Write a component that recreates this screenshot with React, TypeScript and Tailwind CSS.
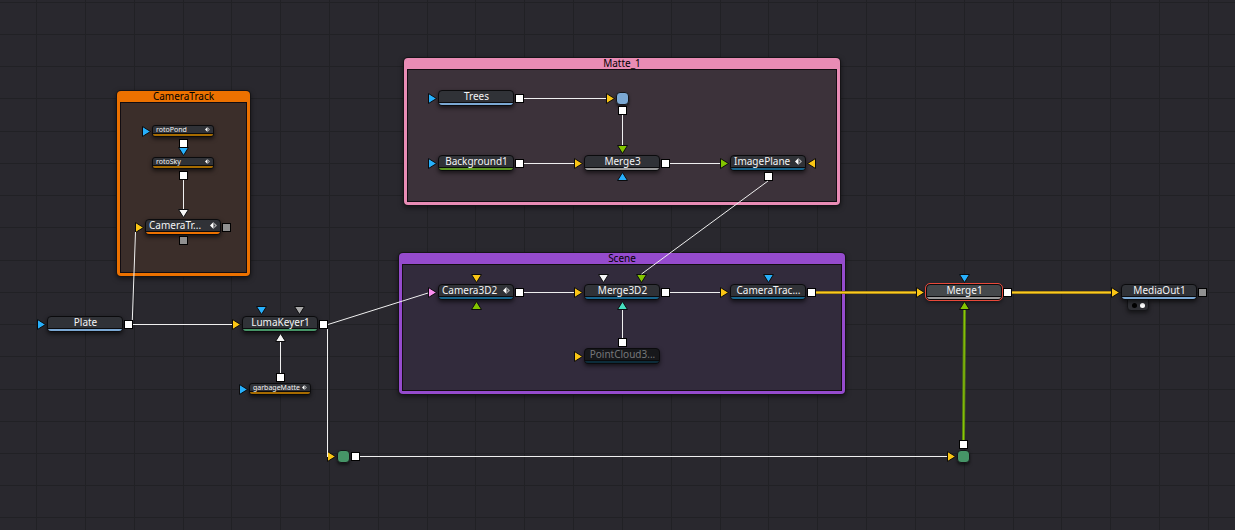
import { clsx } from "clsx";

type Direction = "right" | "left" | "up" | "down";

interface GroupItem {
  title: string;
  x: number;
  y: number;
  width: number;
  height: number;
  frame: string;
  body: string;
}

interface NodeItem {
  name: string;
  x: number;
  y: number;
  stripe: string;
  keyed?: boolean;
  small?: boolean;
  selected?: boolean;
  disabled?: boolean;
}

const groups: GroupItem[] = [
  { title: "CameraTrack", x: 117, y: 91, width: 133, height: 185, frame: "bg-[#ec7100]", body: "bg-[#3b2e2a]" },
  { title: "Matte_1", x: 404, y: 58, width: 436, height: 147, frame: "bg-[#e98cb5]", body: "bg-[#3c323a]" },
  { title: "Scene", x: 399, y: 253, width: 446, height: 141, frame: "bg-[#954bcd]", body: "bg-[#322b3c]" },
];

const nodes: NodeItem[] = [
  { name: "rotoPond", x: 152, y: 125, stripe: "bg-[#a66b00]", keyed: true, small: true },
  { name: "rotoSky", x: 152, y: 157, stripe: "bg-[#a66b00]", keyed: true, small: true },
  { name: "CameraTr...", x: 145, y: 219, stripe: "bg-[#ec7100]", keyed: true },
  { name: "Plate", x: 47, y: 316, stripe: "bg-[#7ba8d3]" },
  { name: "LumaKeyer1", x: 242, y: 316, stripe: "bg-[#469467]" },
  { name: "garbageMatte", x: 249, y: 383, stripe: "bg-[#a66b00]", keyed: true, small: true },
  { name: "Trees", x: 438, y: 90, stripe: "bg-[#7ba8d3]" },
  { name: "Background1", x: 438, y: 155, stripe: "bg-[#5d9a21]" },
  { name: "Merge3", x: 584, y: 155, stripe: "bg-[#9a9a9a]" },
  { name: "ImagePlane", x: 730, y: 155, stripe: "bg-[#17648c]", keyed: true },
  { name: "Camera3D2", x: 438, y: 284, stripe: "bg-[#17648c]", keyed: true },
  { name: "Merge3D2", x: 584, y: 284, stripe: "bg-[#17648c]" },
  { name: "CameraTrac...", x: 730, y: 284, stripe: "bg-[#17648c]" },
  { name: "PointCloud3...", x: 584, y: 348, stripe: "bg-[#0d2c3a]", disabled: true },
  { name: "Merge1", x: 926, y: 284, stripe: "bg-[#9a9a9a]", selected: true },
  { name: "MediaOut1", x: 1121, y: 284, stripe: "bg-[#7ba8d3]" },
];

const routers = [
  { x: 616, y: 92, color: "bg-[#7ba8d3]" },
  { x: 337, y: 450, color: "bg-[#469467]" },
  { x: 957, y: 450, color: "bg-[#469467]" },
];

const outputs: { x: number; y: number; idle?: boolean }[] = [
  { x: 179, y: 139 },
  { x: 179, y: 171 },
  { x: 222, y: 223, idle: true },
  { x: 179, y: 236, idle: true },
  { x: 124, y: 320 },
  { x: 319, y: 320 },
  { x: 276, y: 373 },
  { x: 351, y: 452 },
  { x: 515, y: 94 },
  { x: 618, y: 106 },
  { x: 515, y: 159 },
  { x: 661, y: 159 },
  { x: 764, y: 172 },
  { x: 515, y: 288 },
  { x: 661, y: 288 },
  { x: 807, y: 288 },
  { x: 618, y: 338 },
  { x: 1003, y: 288 },
  { x: 1198, y: 288, idle: true },
  { x: 959, y: 440 },
];

const BLUE = "fill-[#27b0fc]";
const YELLOW = "fill-[#fac515]";
const GREEN = "fill-[#83c400]";
const WHITE = "fill-[#f5f5f5]";

const inputs: { x: number; y: number; dir: Direction; color: string }[] = [
  { x: 142, y: 126, dir: "right", color: BLUE },
  { x: 178, y: 147, dir: "down", color: BLUE },
  { x: 178, y: 209, dir: "down", color: WHITE },
  { x: 135, y: 222, dir: "right", color: YELLOW },
  { x: 37, y: 319, dir: "right", color: BLUE },
  { x: 232, y: 319, dir: "right", color: YELLOW },
  { x: 256, y: 306, dir: "down", color: BLUE },
  { x: 294, y: 306, dir: "down", color: "fill-[#a8a8a8]" },
  { x: 275, y: 333, dir: "up", color: WHITE },
  { x: 239, y: 384, dir: "right", color: BLUE },
  { x: 327, y: 451, dir: "right", color: YELLOW },
  { x: 428, y: 93, dir: "right", color: BLUE },
  { x: 606, y: 93, dir: "right", color: YELLOW },
  { x: 617, y: 145, dir: "down", color: GREEN },
  { x: 428, y: 158, dir: "right", color: BLUE },
  { x: 574, y: 158, dir: "right", color: YELLOW },
  { x: 617, y: 172, dir: "up", color: BLUE },
  { x: 720, y: 158, dir: "right", color: GREEN },
  { x: 807, y: 158, dir: "left", color: YELLOW },
  { x: 428, y: 287, dir: "right", color: "fill-[#fb8ff0]" },
  { x: 471, y: 274, dir: "down", color: YELLOW },
  { x: 471, y: 301, dir: "up", color: GREEN },
  { x: 574, y: 287, dir: "right", color: YELLOW },
  { x: 598, y: 274, dir: "down", color: WHITE },
  { x: 636, y: 274, dir: "down", color: GREEN },
  { x: 617, y: 301, dir: "up", color: "fill-[#47e0c0]" },
  { x: 720, y: 287, dir: "right", color: YELLOW },
  { x: 763, y: 274, dir: "down", color: BLUE },
  { x: 574, y: 351, dir: "right", color: YELLOW },
  { x: 916, y: 287, dir: "right", color: YELLOW },
  { x: 959, y: 274, dir: "down", color: BLUE },
  { x: 959, y: 301, dir: "up", color: GREEN },
  { x: 1111, y: 287, dir: "right", color: YELLOW },
  { x: 947, y: 451, dir: "right", color: YELLOW },
];

const wires = [
  "M183.5 180V209",
  "M133 324.5H232",
  "M132.3 320L135.5 232",
  "M280.5 373V342",
  "M328 324.5L428 293",
  "M327.5 329V457",
  "M360 456.5H947",
  "M524 98.5H606",
  "M622.5 115V145",
  "M524 163.5H574",
  "M670 163.5H720",
  "M768 181L641.5 274",
  "M524 292.5H574",
  "M670 292.5H720",
  "M622.5 338V310",
];

const arrowPaths: Record<Direction, string> = {
  right: "M0.5 0.5L8.5 5.5L0.5 10.5Z",
  left: "M8.5 0.5L0.5 5.5L8.5 10.5Z",
  down: "M0.5 0.5H10.5L5.5 8.5Z",
  up: "M0.5 8.5H10.5L5.5 0.5Z",
};

function Grid() {
  const columns = Array.from({ length: 80 }, (_, i) => Math.floor(36.6 + i * 48.82));
  const rows = Array.from({ length: 70 }, (_, i) => Math.floor(2.15 + i * 32.24));

  return (
    <svg className="absolute inset-0 h-full w-full" aria-hidden="true">
      <g className="stroke-[#212125]">
        {columns.map((x) => (
          <line key={x} x1={x + 0.5} x2={x + 0.5} y1="0" y2="100%" />
        ))}
        {rows.map((y) => (
          <line key={y} x1="0" x2="100%" y1={y + 0.5} y2={y + 0.5} />
        ))}
      </g>
    </svg>
  );
}

function Group({ group }: { group: GroupItem }) {
  return (
    <section
      className={clsx(
        "absolute flex flex-col rounded-sm px-[3px] pb-[3px] shadow-[0_0_0_1px_#151417,0_2px_5px_1px_rgba(0,0,0,0.5)]",
        group.frame,
      )}
      style={{ left: group.x, top: group.y, width: group.width, height: group.height }}
    >
      <h2 className="h-[11px] text-center text-[10px] leading-[10px] text-black">{group.title}</h2>
      <div className={clsx("flex-1 border border-[#120d12]", group.body)} />
    </section>
  );
}

function KeyframeIcon({ small }: { small?: boolean }) {
  return (
    <svg viewBox="0 0 7 7" className={clsx("shrink-0", small ? "size-[5px]" : "size-[7px]")} aria-hidden="true">
      <path d="M3.5 0V7L0 3.5Z" className="fill-white" />
      <path d="M4.2 0.7L7 3.5L4.2 6.3Z" className="fill-[#a9aaac]" />
      <path d="M4.2 2.4L5.3 3.5L4.2 4.6Z" className="fill-[#303237]" />
    </svg>
  );
}

function Node({ node }: { node: NodeItem }) {
  return (
    <div
      className={clsx(
        "absolute flex flex-col overflow-hidden border border-[#0b0b0d] shadow-[0_2px_4px_rgba(0,0,0,0.6)]",
        node.small ? "h-3 w-[62px] rounded-[3px]" : "h-4 w-[76px] rounded",
        node.disabled ? "bg-[#17181b]" : node.selected ? "bg-[#44484b]" : "bg-[#303237]",
        node.selected && "outline outline-[#e8493a]",
      )}
      style={{ left: node.x, top: node.y }}
    >
      <div
        className={clsx(
          "flex flex-1 border-b border-[#0b0b0d]",
          node.keyed ? "justify-between px-[3px]" : "justify-center pl-px",
          node.small ? "items-center text-[7px] leading-[7px]" : "items-start text-[10px] leading-[10px]",
          node.disabled ? "text-[#76777a]" : "text-[#f4f4f5]",
        )}
      >
        <span className="whitespace-nowrap">{node.name}</span>
        {node.keyed ? (
          <span className="flex self-center">
            <KeyframeIcon small={node.small} />
          </span>
        ) : null}
      </div>
      <div className={clsx("h-0.5 shrink-0", node.stripe)} />
    </div>
  );
}

function InputArrow({ x, y, dir, color }: { x: number; y: number; dir: Direction; color: string }) {
  const horizontal = dir === "right" || dir === "left";

  return (
    <svg
      className={clsx("absolute overflow-visible", horizontal ? "h-[11px] w-[9px]" : "h-[9px] w-[11px]")}
      style={{ left: x, top: y }}
      aria-hidden="true"
    >
      <path d={arrowPaths[dir]} className={clsx("stroke-[#0b0b0d]", color)} />
    </svg>
  );
}

function Wires() {
  return (
    <svg className="pointer-events-none absolute inset-0 h-full w-full overflow-visible" aria-hidden="true">
      <g className="fill-none stroke-[#f0f0f0]">
        {wires.map((d) => (
          <path key={d} d={d} />
        ))}
      </g>
      <g className="fill-none">
        <path d="M816 292.5H916M1012 292.5H1111" className="stroke-[#b58f17] stroke-3" />
        <path d="M816 292.5H916M1012 292.5H1111" className="stroke-[#fbcb1f] stroke-1" />
        <path d="M963.5 440L964.5 310" className="stroke-[#5d8710] stroke-3" />
        <path d="M963.5 440L964.5 310" className="stroke-[#8ccb06] stroke-1" />
      </g>
    </svg>
  );
}

function ViewIndicator() {
  return (
    <div className="absolute top-[299px] left-[1127px] flex h-3 w-[22px] items-center justify-center gap-[3px] rounded-b border border-[#151518] bg-[#2e2f34] shadow-[0_2px_4px_rgba(0,0,0,0.5)]">
      <span className="size-[5px] rounded-full bg-black" />
      <span className="size-[5px] rounded-full bg-white" />
    </div>
  );
}

export default function App() {
  return (
    <main className="relative min-h-screen w-full overflow-hidden bg-[#29282e] font-['Noto_Sans',sans-serif]">
      <Grid />
      {groups.map((group) => (
        <Group key={group.title} group={group} />
      ))}
      <ViewIndicator />
      {nodes.map((node) => (
        <Node key={node.name} node={node} />
      ))}
      {routers.map((router) => (
        <div
          key={`${router.x}-${router.y}`}
          className={clsx(
            "absolute size-[13px] rounded border border-[#151518] shadow-[0_2px_3px_rgba(0,0,0,0.5)]",
            router.color,
          )}
          style={{ left: router.x, top: router.y }}
        />
      ))}
      {inputs.map((input) => (
        <InputArrow key={`${input.x}-${input.y}`} {...input} />
      ))}
      {outputs.map((output) => (
        <div
          key={`${output.x}-${output.y}`}
          className={clsx("absolute size-[9px] border border-black", output.idle ? "bg-[#909090]" : "bg-white")}
          style={{ left: output.x, top: output.y }}
        />
      ))}
      <Wires />
    </main>
  );
}
